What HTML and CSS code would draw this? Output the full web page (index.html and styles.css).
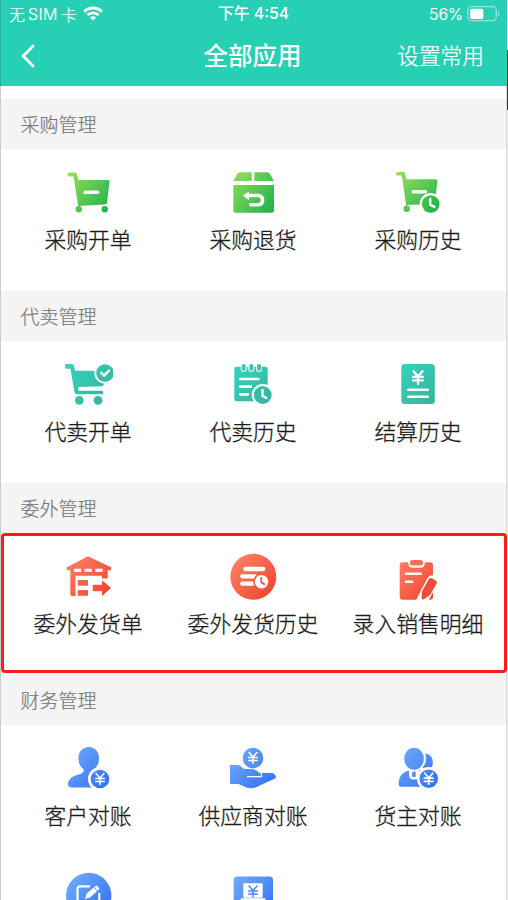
FILE: index.html
```
<!DOCTYPE html>
<html lang="zh-CN">
<head>
<meta charset="utf-8">
<title>全部应用</title>
<link rel="stylesheet" href="styles.css">
</head>
<body>
<svg class="defs" width="0" height="0" aria-hidden="true">
  <defs>
    <linearGradient id="green" gradientUnits="userSpaceOnUse" x1="5" y1="8" x2="45" y2="42"><stop offset="0" stop-color="#92df5c"/><stop offset="1" stop-color="#22b24b"/></linearGradient>
    <linearGradient id="teal" gradientUnits="userSpaceOnUse" x1="5" y1="6" x2="44" y2="44"><stop offset="0" stop-color="#35d3c0"/><stop offset="1" stop-color="#36b39a"/></linearGradient>
    <linearGradient id="red" gradientUnits="userSpaceOnUse" x1="6" y1="8" x2="45" y2="44"><stop offset="0" stop-color="#ff8068"/><stop offset="1" stop-color="#f0452c"/></linearGradient>
    <linearGradient id="blue" gradientUnits="userSpaceOnUse" x1="6" y1="8" x2="45" y2="42"><stop offset="0" stop-color="#6daafb"/><stop offset="1" stop-color="#3470f4"/></linearGradient>
    <g id="yen" fill="none" stroke-linecap="round"><path d="M-4 -5.5 0 -1 4 -5.5M0 -1V5.5M-4.3 -.5H4.3M-4.3 2.6H4.3"/></g>
  </defs>
</svg>
<div class="screen">
  <main class="phone">
    <header class="top">
      <div class="status">
        <div class="carrier"><span>无</span><span class="sim">SIM</span><span>卡</span>
          <svg class="wifi" viewBox="0 0 20 15"><g fill="none" stroke="#fff" stroke-width="2.9"><path d="M1.2 5.6a12.5 12.5 0 0 1 17.6 0"/><path d="M4.6 9.1a7.6 7.6 0 0 1 10.8 0"/></g><path d="M10 14.6 7 11.6a4.2 4.2 0 0 1 6 0z" fill="#fff"/></svg>
        </div>
        <div class="time">下午 4:54</div>
        <div class="power"><span>56%</span>
          <svg class="battery" viewBox="0 0 33 16"><rect x=".7" y=".7" width="28.6" height="14" rx="4" fill="none" stroke="#fff" stroke-opacity=".5" stroke-width="1.3"/><rect x="3" y="2.7" width="13.3" height="10.3" rx="1.8" fill="#fff"/><path d="M31 5.2a3 3 0 0 1 0 5z" fill="#fff" fill-opacity=".5"/></svg>
        </div>
      </div>
      <nav class="nav">
        <svg class="back" viewBox="0 0 14 24"><path d="M12 2 2.2 12 12 22" fill="none" stroke="#fff" stroke-width="2.7" stroke-linecap="round" stroke-linejoin="round"/></svg>
        <h1>全部应用</h1>
        <span class="setting">设置常用</span>
      </nav>
    </header>

    <section>
      <h2>采购管理</h2>
      <div class="apps">
        <div class="app">
          <svg viewBox="0 0 50 50"><g fill="url(#green)"><path d="M6.4 5.6H12q1.4 0 1.8 1.4L15.3 13H45q1.9 0 1.6 1.8L44 35.8q-.2 1.5-1.8 1.6L19 38.7q-3 .2-3.8.8L10.6 9.4H6.4a1.9 1.9 0 0 1 0-3.8z"/><circle cx="15.7" cy="42.3" r="3.2"/><circle cx="41.7" cy="42.3" r="3.2"/></g><path d="M22.2 25.3h12.4" stroke="#fff" stroke-width="3.6" stroke-linecap="round"/></svg>
          <span>采购开单</span>
        </div>
        <div class="app">
          <svg viewBox="0 0 50 50"><g fill="url(#green)"><path d="M11.5 5.3H23.7V14H5.3L9 7q.8-1.7 2.5-1.7zM26.3 5.3h13.2q1.7 0 2.5 1.7l4 7H26.3z"/><path d="M5.3 18H46v25.2q0 2.5-2.5 2.5H7.8q-2.5 0-2.5-2.5z"/></g><path d="M19 28.6h11.7a4.6 4.6 0 0 1 0 9.1H22.8" fill="none" stroke="#fff" stroke-width="3.5" stroke-linecap="round"/><path d="M14.7 28.7 21 24.5v8.4z" fill="#fff"/></svg>
          <span>采购退货</span>
        </div>
        <div class="app">
          <svg viewBox="0 0 50 50"><g fill="url(#green)"><path d="M4.8 4.9h5.4q1.4 0 1.8 1.4l1.5 6h29.3q1.9 0 1.6 1.8L42 35.8q-.2 1.5-1.8 1.6L17 37.8q-3 .2-3.8.8L8.8 8.6h-4a1.85 1.85 0 0 1 0-3.7z"/><circle cx="13.7" cy="41.7" r="3.2"/></g><path d="M20.4 24.7h12" stroke="#fff" stroke-width="3.6" stroke-linecap="round"/><circle cx="37.7" cy="37" r="11" fill="#fff"/><circle cx="37.7" cy="37" r="8.8" fill="url(#green)"/><path d="M37.2 32v5.7l4.3 2.2" fill="none" stroke="#fff" stroke-width="2.4" stroke-linecap="round"/></svg>
          <span>采购历史</span>
        </div>
      </div>
    </section>

    <section>
      <h2>代卖管理</h2>
      <div class="apps">
        <div class="app">
          <svg viewBox="0 0 50 50"><g fill="url(#teal)"><path fill-rule="evenodd" d="M3.5 5H9q1.500 0 1.900 1.600l1.200 5.100H41V24.500q0 2.600-2.500 2.800L15.300 28v3.700H39a1.800 1.800 0 0 1 0 3.500H13.800q-1.900 0-2.300-1.900L7.400 9.800H3.500Q2 9.800 2 8.400V6.400Q2 5 3.500 5z"/><circle cx="16.300" cy="41.300" r="4.400"/><circle cx="35" cy="41.300" r="4.400"/></g><circle cx="42" cy="14" r="10.700" fill="#fff"/><circle cx="42" cy="14" r="8.800" fill="url(#teal)"/><path d="m38.200 13.800 2.800 2.800 5-5" fill="none" stroke="#fff" stroke-width="2.300" stroke-linecap="round"/></svg>
          <span>代卖开单</span>
        </div>
        <div class="app">
          <svg viewBox="0 0 50 50"><rect x="6.300" y="7.700" width="33.400" height="34.500" rx="2.200" fill="url(#teal)"/><g stroke-linecap="round"><path d="M15.700 7v3M23.300 7v3M31 7v3" stroke="#fff" stroke-width="6"/><path d="M15.700 6.800v3.200M23.300 6.800v3.200M31 6.800v3.200" stroke="#36c5b1" stroke-width="3.800"/><path d="M12.300 20h18M12.300 27.700h10.500M12.300 35.300h7.500" stroke="#fff" stroke-width="2.700"/></g><circle cx="34.700" cy="36" r="11" fill="#fff"/><circle cx="34.700" cy="36" r="8.900" fill="url(#teal)"/><path d="M34.500 31v5.800l3.900 2.200" fill="none" stroke="#fff" stroke-width="2.400" stroke-linecap="round"/></svg>
          <span>代卖历史</span>
        </div>
        <div class="app">
          <svg viewBox="0 0 50 50"><rect x="8.300" y="5" width="33.500" height="40" rx="3.500" fill="url(#teal)"/><use href="#yen" transform="translate(25 18.500) scale(1.130)" stroke="#fff" stroke-width="2.100"/><path d="M15.300 30.700h19.500M15.300 37.700h19.500" stroke="#fff" stroke-width="2.500" stroke-linecap="round"/></svg>
          <span>结算历史</span>
        </div>
      </div>
    </section>

    <section class="marked">
      <h2>委外管理</h2>
      <div class="apps">
        <div class="app">
          <svg viewBox="0 0 50 50"><path fill="url(#red)" fill-rule="evenodd" d="M25 5.300 48 16.300V19.300H44.700V27.500H39V24.800H12.500V45H9Q7.300 45 7.300 43.200V19.300H3.700V16.300zM11 17.700V21h7v-3.300zM21.700 17.700V21H29v-3.300zM32.400 17.700V21h7.200v-3.300z"/><path fill="url(#red)" d="M14.700 29H25v5.700H14.700zM14.700 39H25v5.800H14.700zM29.700 33.700H39v-4.400l9 7.700-9 8v-4.700h-9.300z"/></svg>
          <span>委外发货单</span>
        </div>
        <div class="app">
          <svg viewBox="0 0 50 50"><circle cx="25.300" cy="25.700" r="23" fill="url(#red)"/><path d="M17.300 18h18M14.200 25.300h13M14.200 32.700h12" stroke="#fff" stroke-width="4.300" stroke-linecap="round"/><circle cx="33.500" cy="30.700" r="8.300" fill="#f5593f"/><circle cx="33.500" cy="30.700" r="6.700" fill="#fff"/><path d="M33.300 27v4.200l3 2" fill="none" stroke="#f15138" stroke-width="1.800" stroke-linecap="round"/></svg>
          <span>委外发货历史</span>
        </div>
        <div class="app">
          <svg viewBox="0 0 50 50"><rect x="6.700" y="11.300" width="33.300" height="37.500" rx="3" fill="url(#red)"/><path d="M15.200 10.500v1.600q0 4.700 4.500 4.700h7.600q4.500 0 4.500-4.700v-1.600z" fill="#fff"/><rect x="17" y="9" width="13" height="5.600" rx="2.300" fill="#fa6e56"/><path d="M13 22.700h14.500M13 30.700h6.200" stroke="#fff" stroke-width="2.500" stroke-linecap="round"/><path d="M39.500 30 33 42 29 50" fill="none" stroke="#fff" stroke-width="11.500" stroke-linecap="round" stroke-linejoin="round"/><path d="M35.700 28.400Q37 26.200 39.200 27.400L42.700 29.400Q44.600 30.700 43.500 32.700L37.300 43.600Q36.700 44.500 35.800 45.100L30.800 48.300Q28.600 49.300 28.600 47L28.900 41.300Q29 40.300 29.500 39.300z" fill="#f14c33"/></svg>
          <span>录入销售明细</span>
        </div>
      </div>
    </section>

    <section>
      <h2>财务管理</h2>
      <div class="apps">
        <div class="app">
          <svg viewBox="0 0 50 50"><path fill="url(#blue)" d="M25.700 4C32 4 36 9 36 15.200c0 4.800-1.800 8.300-4.500 10.500-1.300 1.200-1 4 1.500 6V44.600H8.500C5.700 44.600 4.500 42.300 5.200 39.500c1.500-5.500 7-7 11.500-8.300 4.300-1.200 5-4 3-5.700-2.700-2.300-4.300-5.700-4.300-10.300C15.400 9 19.500 4 25.700 4z"/><circle cx="37" cy="36" r="12" fill="#fff"/><circle cx="37" cy="36" r="9.300" fill="url(#blue)"/><use href="#yen" transform="translate(37 36)" stroke="#fff" stroke-width="1.500"/></svg>
          <span>客户对账</span>
        </div>
        <div class="app">
          <svg viewBox="0 0 50 50"><circle cx="25" cy="15" r="10.300" fill="url(#blue)"/><use href="#yen" transform="translate(25 15)" stroke="#fff" stroke-width="1.500"/><path fill="url(#blue)" d="M2 22h7q3 0 5 2.400 1.500 1.700 4 1.700h5.500q5 0 7.800 4H43q4.400 0 5 4.900L28 44.200q-4 1.600-9 .5L10.500 41H2z"/><path d="M19 33.700H33.300V29.500" fill="none" stroke="#fff" stroke-width="1.200"/></svg>
          <span>供应商对账</span>
        </div>
        <div class="app">
          <svg viewBox="0 0 50 50"><g fill="url(#blue)"><path d="M31.500 10.500c5 0 8.300 4 8.300 8.500 0 2.500-.5 4.500-1.500 6H28z"/><path d="M17 27q-11 2.800-11.300 12.500v2q0 2.200 2.200 2.200H33V27z"/></g><ellipse cx="21" cy="15.700" rx="12" ry="12.500" fill="#fff"/><path d="M16 26v6q0 4.500 5 4.500t5-4.500v-6z" fill="#fff"/><ellipse cx="21" cy="15.700" rx="9.800" ry="11" fill="url(#blue)"/><path d="M19.200 28.700h3.500v5.200h-3.500z" fill="url(#blue)"/><circle cx="35.700" cy="35.700" r="11.800" fill="#fff"/><circle cx="35.700" cy="35.700" r="9.300" fill="url(#blue)"/><use href="#yen" transform="translate(35.700 35.700)" stroke="#fff" stroke-width="1.700"/></svg>
          <span>货主对账</span>
        </div>
        <div class="app">
          <svg viewBox="0 0 50 50"><circle cx="25.700" cy="24.500" r="22.700" fill="url(#blue)"/><path d="M27 15.400H17q-2.500 0-2.500 2.500V35h21.800V22" fill="none" stroke="#fff" stroke-width="2.200"/><path d="m22 28 1.500-5.200L32.300 15q1.200-1 2.300.2l1.200 1.300q1.100 1.300-.1 2.300L27 26.600z" fill="#fff"/><path d="m31 16.300 3.500 3.900" stroke="#4d8bf8" stroke-width="1"/></svg>
        </div>
        <div class="app">
          <svg viewBox="0 0 50 50"><rect x="5.700" y="5.500" width="39.300" height="39.500" rx="3.500" fill="url(#blue)"/><rect x="15.300" y="12.300" width="19.400" height="14.500" rx="1" fill="#fff"/><use href="#yen" transform="translate(25 20.500)" stroke="#4b88f8" stroke-width="1.500"/><path d="M12.700 28.200h24.500" stroke="#fff" stroke-width="2"/></svg>
        </div>
      </div>
    </section>
  </main>
  <aside class="edge"><i class="dark"></i></aside>
</div>
</body>
</html>
```
FILE: styles.css
```
* { box-sizing: border-box; }

body {
  margin: 0;
  height: 900px;
  overflow: hidden;
  background: #fff;
  color: #1c1c1c;
  font-family: "Noto Sans CJK SC", sans-serif;
}

.defs { display: block; }

.screen { display: flex; height: 900px; overflow: hidden; }

.phone {
  width: 507px;
  flex: none;
  border-left: 1px solid #ccc;
  border-right: 1px solid #dcdcdc;
}

.top {
  height: 86px;
  margin: 0 -1px 13px;
  border-left: 1px solid #22b49b;
  background: #27cfb5;
  color: #fff;
}

.status {
  display: grid;
  grid-template-columns: 1fr auto 1fr;
  height: 28px;
  padding: 0 7px 0 8px;
  align-items: center;
  font-size: 16px;
  line-height: 28px;
}

.carrier, .power { display: flex; align-items: center; }
.carrier { gap: 3px; font-weight: 300; -webkit-text-stroke: .2px; margin-top: -1px; }
.sim, .power { font-family: Inter, sans-serif; }
.sim { font-size: 16px; letter-spacing: .3px; }
.wifi { width: 20px; height: 15px; margin-left: 3px; }
.time { font-family: Inter, "Noto Sans CJK SC", sans-serif; font-size: 15.800px; font-weight: 500; margin-left: -2px; }
.power { justify-content: flex-end; gap: 4px; margin-top: -1px; font-weight: 300; -webkit-text-stroke: .2px; }
.battery { width: 33px; height: 16px; }

.nav {
  display: grid;
  grid-template-columns: 1fr auto 1fr;
  height: 56px;
  padding: 0 23px 0 20px;
  align-items: center;
}
.back { width: 14px; height: 24px; }
.nav h1 { margin: -2px 0 0; font-size: 24.500px; line-height: 36px; font-weight: 500; }
.setting {
  justify-self: end;
  margin-top: -2px;
  font-size: 21.700px;
  font-weight: 300;
  line-height: 36px;
  -webkit-text-stroke: .25px;
}

h2 {
  height: 50px;
  margin: 0;
  padding-left: 19.500px;
  background: #f4f4f4;
  color: #777;
  font-size: 19px;
  font-weight: 300;
  line-height: 50px;
  -webkit-text-stroke: .2px;
}

.apps {
  display: grid;
  grid-template-columns: repeat(3, 165px);
  grid-auto-rows: 128px;
  padding: 7px 0 7px 4.500px;
}

.app {
  display: flex;
  flex-direction: column;
  align-items: center;
  padding-top: 11px;
}
.app svg { width: 50px; height: 50px; flex: none; }
.app span {
  margin-top: 6px;
  font-size: 21.800px;
  line-height: 32px;
  font-weight: 300;
  white-space: nowrap;
  -webkit-text-stroke: .3px;
}

.marked .apps {
  height: 140px;
  margin: 0 -1px 2px 0;
  padding: 4px 0 4px 1.500px;
  border: 3px solid #ff1d10;
  border-radius: 4px;
}

.edge { flex: 1; padding-top: 50px; background: #ededed; }
.edge .dark { display: block; height: 60px; background: #333; }
```
